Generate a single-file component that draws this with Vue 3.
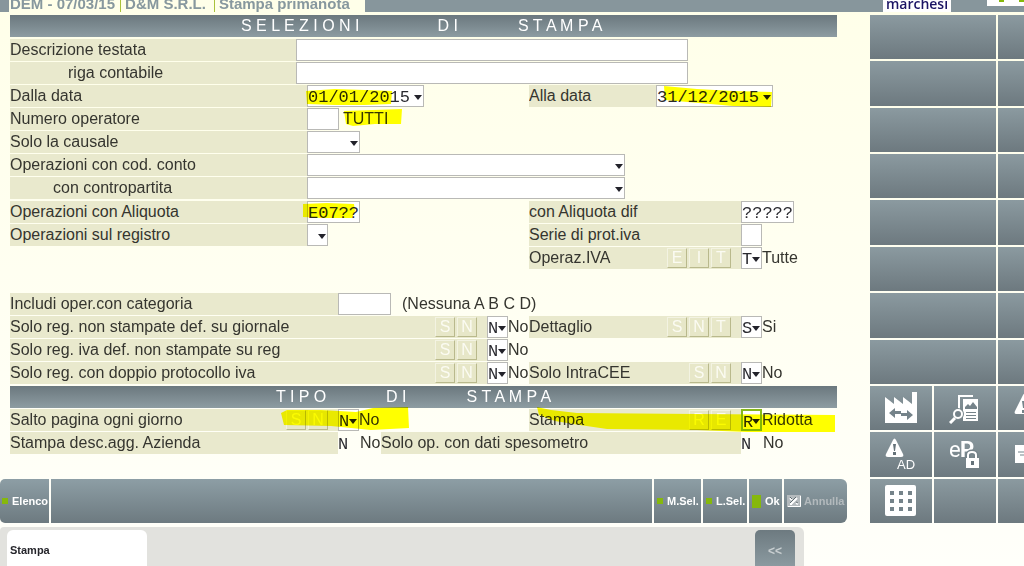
<script setup>
import { ref } from 'vue'

const upperFields = [
  { id: 'descr', label: 'Descrizione testata', indent: '' },
  { id: 'riga', label: 'riga contabile', indent: 'indent-lg' }
]
const accountFields = [
  { id: 'conto', label: 'Operazioni con cod. conto', indent: '' },
  { id: 'contro', label: 'con contropartita', indent: 'indent-md' }
]
const from = ref('01/01/2015')
const to = ref('31/12/2015')
const rate = ref('E07??')
const deferred = ref('?????')
const wideCells = 8
</script>

<template>
  <div class="page">
    <header class="topbar">
      <div class="crumbs">
        <span>DEM - 07/03/15</span>
        <span>D&amp;M S.R.L.</span>
        <span>Stampa primanota</span>
      </div>
      <div class="brand">marchesi</div>
      <div class="badge">
        <svg width="37" height="6" viewBox="0 0 37 6"><path d="M12 0h5v2h-5zM32 0h5v2h-5z" fill="#86b80c" /></svg>
      </div>
    </header>

    <div class="work">
      <main class="left">
        <form class="form" @submit.prevent>
          <h2 class="bar bar-first"><span>S E L E Z I O N I</span><span>D I</span><span>S T A M P A</span></h2>

          <div v-for="f in upperFields" :key="f.id" class="row">
            <div class="strip s-text"><label :for="f.id" :class="f.indent">{{ f.label }}</label></div>
            <input :id="f.id" class="box w-text" type="text" />
          </div>

          <div class="row">
            <div class="half">
              <div class="strip s-field"><label for="from">Dalla data</label></div>
              <span class="drop w-date">
                <select id="from" v-model="from"><option>01/01/2015</option></select>
                <svg class="arrow" viewBox="0 0 8 5"><path d="M0 0h8L4 5z" /></svg>
              </span>
              <svg class="mark m-from" viewBox="0 0 88 18"><path d="M1 3L30 1 60 2 87 3 86 16 60 17 30 17 2 16z" /></svg>
            </div>
            <div class="half-right">
              <div class="strip s-date"><label for="to">Alla data</label></div>
              <span class="drop w-date">
                <select id="to" v-model="to"><option>31/12/2015</option></select>
                <svg class="arrow" viewBox="0 0 8 5"><path d="M0 0h8L4 5z" /></svg>
              </span>
              <svg class="mark m-to" viewBox="0 0 110 21"><path d="M1 0L34 3 70 5 109 6 108 21 70 20 36 17 2 14z" /></svg>
            </div>
          </div>

          <div class="row">
            <div class="half">
              <div class="strip s-field"><label for="oper">Numero operatore</label></div>
              <input id="oper" class="box w-oper" type="text" />
              <output class="out out-gap" for="oper">TUTTI</output>
              <svg class="mark m-all" viewBox="0 0 60 18"><path d="M1 3L30 2 59 1 58 16 32 16 10 18 3 16z" /></svg>
            </div>
          </div>

          <div class="row">
            <div class="strip s-field"><label for="causale">Solo la causale</label></div>
            <span class="drop w-five">
              <select id="causale"><option></option></select>
              <svg class="arrow" viewBox="0 0 8 5"><path d="M0 0h8L4 5z" /></svg>
            </span>
          </div>

          <div v-for="f in accountFields" :key="f.id" class="row">
            <div class="strip s-field"><label :for="f.id" :class="f.indent">{{ f.label }}</label></div>
            <span class="drop w-account">
              <select :id="f.id"><option></option></select>
              <svg class="arrow" viewBox="0 0 8 5"><path d="M0 0h8L4 5z" /></svg>
            </span>
          </div>

          <div class="row spaced">
            <div class="half">
              <div class="strip s-field"><label for="rate">Operazioni con Aliquota</label></div>
              <input id="rate" v-model="rate" class="box w-five" type="text" />
              <svg class="mark m-rate" viewBox="0 0 54 17"><path d="M1 2L25 1 52 2 53 9 50 16 20 16 1 15z" /></svg>
            </div>
            <div class="half-right">
              <div class="strip s-right"><label for="deferred">con Aliquota dif</label></div>
              <input id="deferred" v-model="deferred" class="box w-five" type="text" />
            </div>
          </div>

          <div class="row">
            <div class="half">
              <div class="strip s-field"><label for="registro">Operazioni sul registro</label></div>
              <span class="drop w-one">
                <select id="registro"><option></option></select>
                <svg class="arrow" viewBox="0 0 8 5"><path d="M0 0h8L4 5z" /></svg>
              </span>
            </div>
            <div class="half-right">
              <div class="strip s-right"><label for="serie">Serie di prot.iva</label></div>
              <input id="serie" class="box w-one" type="text" />
            </div>
          </div>

          <div class="row">
            <div class="half"></div>
            <div class="half-right">
              <div class="strip s-right">
                <label for="iva">Operaz.IVA</label>
                <span class="keys"><button type="button">E</button><button type="button">I</button><button type="button">T</button></span>
              </div>
              <span class="drop w-one">
                <select id="iva"><option>T</option></select>
                <svg class="arrow" viewBox="0 0 8 5"><path d="M0 0h8L4 5z" /></svg>
              </span>
              <output class="out" for="iva">Tutte</output>
            </div>
          </div>

          <div class="row"></div>

          <div class="row">
            <div class="strip s-mid"><label for="categoria">Includi oper.con categoria</label></div>
            <input id="categoria" class="box w-five" type="text" />
            <span class="out hint">(Nessuna A B C D)</span>
          </div>

          <div class="row">
            <div class="half">
              <div class="strip s-long">
                <label for="giornale">Solo reg. non stampate def. su giornale</label>
                <span class="keys"><button type="button">S</button><button type="button">N</button></span>
              </div>
              <span class="drop w-one">
                <select id="giornale"><option>N</option></select>
                <svg class="arrow" viewBox="0 0 8 5"><path d="M0 0h8L4 5z" /></svg>
              </span>
              <output class="out" for="giornale">No</output>
            </div>
            <div class="half-right">
              <div class="strip s-right">
                <label for="dettaglio">Dettaglio</label>
                <span class="keys"><button type="button">S</button><button type="button">N</button><button type="button">T</button></span>
              </div>
              <span class="drop w-one">
                <select id="dettaglio"><option>S</option></select>
                <svg class="arrow" viewBox="0 0 8 5"><path d="M0 0h8L4 5z" /></svg>
              </span>
              <output class="out" for="dettaglio">Si</output>
            </div>
          </div>

          <div class="row">
            <div class="half">
              <div class="strip s-long">
                <label for="ivareg">Solo reg. iva def. non stampate su reg</label>
                <span class="keys"><button type="button">S</button><button type="button">N</button></span>
              </div>
              <span class="drop w-one">
                <select id="ivareg"><option>N</option></select>
                <svg class="arrow" viewBox="0 0 8 5"><path d="M0 0h8L4 5z" /></svg>
              </span>
              <output class="out" for="ivareg">No</output>
            </div>
          </div>

          <div class="row">
            <div class="half">
              <div class="strip s-long">
                <label for="doppio">Solo reg. con doppio protocollo iva</label>
                <span class="keys"><button type="button">S</button><button type="button">N</button></span>
              </div>
              <span class="drop w-one">
                <select id="doppio"><option>N</option></select>
                <svg class="arrow" viewBox="0 0 8 5"><path d="M0 0h8L4 5z" /></svg>
              </span>
              <output class="out" for="doppio">No</output>
            </div>
            <div class="half-right">
              <div class="strip s-right">
                <label for="intra">Solo IntraCEE</label>
                <span class="keys"><button type="button">S</button><button type="button">N</button></span>
              </div>
              <span class="drop w-one">
                <select id="intra"><option>N</option></select>
                <svg class="arrow" viewBox="0 0 8 5"><path d="M0 0h8L4 5z" /></svg>
              </span>
              <output class="out" for="intra">No</output>
            </div>
          </div>

          <h2 class="bar bar-second"><span>T I P O</span><span>D I</span><span>S T A M P A</span></h2>

          <div class="row">
            <div class="half">
              <div class="strip s-mid">
                <label for="salto">Salto pagina ogni giorno</label>
                <span class="keys"><button type="button">S</button><button type="button">N</button></span>
              </div>
              <span class="drop w-one">
                <select id="salto"><option>N</option></select>
                <svg class="arrow" viewBox="0 0 8 5"><path d="M0 0h8L4 5z" /></svg>
              </span>
              <output class="out" for="salto">No</output>
              <svg class="mark m-jump" viewBox="0 0 128 25"><path d="M0 6L6 3 40 3 75 5 92 1 127 0 128 21 90 23 50 19 3 18z" /></svg>
            </div>
            <div class="half-right">
              <div class="strip s-right">
                <label for="stampa">Stampa</label>
                <span class="keys"><button type="button">R</button><button type="button">E</button></span>
              </div>
              <span class="drop w-one focus">
                <select id="stampa"><option>R</option></select>
                <svg class="arrow" viewBox="0 0 8 5"><path d="M0 0h8L4 5z" /></svg>
              </span>
              <output class="out" for="stampa">Ridotta</output>
              <svg class="mark m-print" viewBox="0 0 300 26"><path d="M0 0L14 3 40 6 160 7 298 8 298 25 210 25 160 23 70 22 36 17 18 14 2 8z" /></svg>
            </div>
          </div>

          <div class="row">
            <div class="strip s-mid"><span>Stampa desc.agg. Azienda</span></div>
            <span class="fixed">N</span><span class="out">No</span>
            <div class="strip s-spes"><span>Solo op. con dati spesometro</span></div>
            <span class="fixed">N</span><span class="out">No</span>
          </div>
        </form>

        <div class="tools">
          <button type="button" class="tool t-list"><i class="led"></i>Elenco</button>
          <span class="tool filler"></span>
          <button type="button" class="tool t-msel"><i class="led"></i>M.Sel.</button>
          <button type="button" class="tool t-lsel"><i class="led"></i>L.Sel.</button>
          <button type="button" class="tool t-ok"><i class="led big"></i>Ok</button>
          <button type="button" class="tool t-cancel" disabled>
            <svg width="14" height="12" viewBox="0 0 14 12">
              <path d="M0 0h14v12H0z" fill="#b4babd" /><path d="M1 11.500h12.500V1" fill="none" stroke="#fff" />
              <path d="M3 3l2 2M9 8l2 1M4 9l6-6M3 9h2" fill="none" stroke="#fff" stroke-width="2" />
              <path d="M3 2l2 2M9 7l2 1M3 8l6-6" fill="none" stroke="#5f6b70" />
            </svg>Annulla
          </button>
        </div>
      </main>

      <aside class="pad">
        <template v-for="n in wideCells" :key="n">
          <button type="button" class="cell wide" aria-label="Libero"></button>
          <button type="button" class="cell" aria-label="Libero"></button>
        </template>
        <button type="button" class="cell" aria-label="Produzione">
          <svg width="32" height="32" viewBox="0 0 32 32">
            <path d="M0 31V5l9 7V5l9 7V5l9 7V0h5v31z" fill="#fff" />
            <path d="M4 21l6-5v3h6v3h-6v4zM28 23l-6-5v3h-6v3h6v4z" fill="#75838a" />
          </svg>
        </button>
        <button type="button" class="cell" aria-label="Ricerca documenti">
          <svg width="32" height="32" viewBox="0 0 32 32">
            <path d="M10 17V4h14" fill="none" stroke="#fff" stroke-width="2" />
            <path d="M14 7h15v22H14z" fill="#fff" />
            <path d="M16 17v-2l3-3 2 2 3-4 4 5v2zM17 20h10v1H17zM17 23h10v1H17zM17 26h10v1H17z" fill="#75838a" />
            <circle cx="9" cy="22" r="6" fill="#7b898f" />
            <circle cx="9" cy="22" r="4" fill="#75838a" stroke="#fff" stroke-width="2" />
            <path d="M6 26l-5 5" stroke="#fff" stroke-width="3" />
          </svg>
        </button>
        <button type="button" class="cell cut" aria-label="Avvisi">
          <svg width="32" height="32" viewBox="0 0 32 32"><path d="M9 3c1-2 2-2 3 0l8 16c1 2 0 3-2 3H3c-2 0-3-1-2-3z" fill="#fff" /><path d="M8 9h3l-1 7H9zM8 18h3v3H8z" fill="#75838a" /></svg>
        </button>
        <button type="button" class="cell" aria-label="Avvisi AD">
          <svg width="32" height="32" viewBox="0 0 32 32">
            <path d="M8 2c1-2 2-2 3 0l7 14c1 2 0 3-2 3H3c-2 0-3-1-2-3z" fill="#fff" />
            <path d="M8 6h3l-1 7H9zM8 14h3v3H8z" fill="#66737a" />
            <text x="12" y="31" class="ad">AD</text>
          </svg>
        </button>
        <button type="button" class="cell" aria-label="eP protetto">
          <svg width="32" height="32" viewBox="0 0 32 32">
            <text x="0" y="19" class="ep">e</text><text x="11" y="19" class="ep strong">P</text>
            <path d="M19 21v-4c0-4 8-4 8 0v4" fill="none" stroke="#75838a" stroke-width="5" />
            <path d="M19 21v-4c0-4 8-4 8 0v4" fill="none" stroke="#fff" stroke-width="2" />
            <path d="M17 20h13v10H17z" fill="#fff" /><path d="M22 23h3v4h-3z" fill="#66737a" />
          </svg>
        </button>
        <button type="button" class="cell cut" aria-label="Schede">
          <svg width="32" height="32" viewBox="0 0 32 32"><path d="M1 7h30v18H1z" fill="#fff" /><path d="M4 14h8M6 17h6" stroke="#75838a" /></svg>
        </button>
        <button type="button" class="cell" aria-label="Tastierino">
          <svg width="32" height="32" viewBox="0 0 32 32">
            <rect width="31" height="31" rx="2" fill="#fff" />
            <path d="M5 6h4v4H5zM14 6h4v4h-4zM23 6h4v4h-4zM5 14h4v4H5zM14 14h4v4h-4zM23 14h4v4h-4zM5 22h4v4H5zM14 22h4v4h-4zM23 22h4v4h-4z" fill="#75838a" />
          </svg>
        </button>
        <button type="button" class="cell" aria-label="Libero"></button>
        <button type="button" class="cell" aria-label="Libero"></button>
      </aside>
    </div>

    <footer class="dock">
      <button type="button" class="tab">Stampa</button>
      <button type="button" class="collapse">&lt;&lt;</button>
    </footer>
  </div>
</template>

<style>
body {
  margin: 0;
  overflow: hidden;
}
</style>

<style scoped>
* {
  box-sizing: border-box;
}
.page {
  display: flex;
  flex-direction: column;
  min-height: 100vh;
  background: linear-gradient(#ffffe9, #fffff3 60%, #fffffa);
  font-family: 'Liberation Sans', Arial, sans-serif;
  font-size: 16px;
  color: #35352f;
}
button {
  font-family: inherit;
  padding: 0;
  margin: 0;
  border: 0;
  border-radius: 0;
}
.topbar {
  display: flex;
  height: 12px;
  overflow: hidden;
  background: #87969c;
  padding-left: 9px;
}
.crumbs {
  display: flex;
  flex: none;
  align-items: flex-end;
  width: 356px;
  margin-right: auto;
  background: #ffffe9;
  color: #87989e;
  font-size: 15px;
  font-weight: bold;
  line-height: 16px;
  white-space: nowrap;
}
.crumbs span {
  padding: 0 5px 0 1px;
}
.crumbs span + span {
  border-left: 1px solid #a9c23a;
  padding: 0 8px 0 4px;
}
.brand {
  display: flex;
  align-items: flex-end;
  justify-content: center;
  width: 68px;
  margin-right: 36px;
  background: #fff;
  color: #1b1464;
  font-family: 'Open Sans', 'Noto Sans', sans-serif;
  font-size: 14px;
  font-weight: 600;
  line-height: 16px;
}
.badge {
  width: 37px;
  height: 6px;
  background: #fff;
}
.badge svg {
  display: block;
}
.work {
  display: flex;
  gap: 23px;
  padding-top: 3px;
}
.left {
  flex: 1;
  min-width: 0;
}
.form {
  display: flex;
  flex-direction: column;
  gap: 1px;
  margin: 0 10px;
}
.bar {
  display: flex;
  height: 22px;
  margin: 0;
  background: linear-gradient(#6b787e, #8d9ca2);
  color: #fff;
  font-size: 16px;
  font-weight: normal;
  line-height: 22px;
  white-space: nowrap;
}
.bar span + span {
  margin-left: 60px;
}
.bar-first {
  padding-left: 231px;
  margin-bottom: 1px;
}
.bar-first span:first-child {
  margin-right: 18px;
}
.bar-second {
  padding-left: 266px;
  margin-top: 1px;
}
.row,
.half,
.half-right {
  display: flex;
  height: 22px;
}
.spaced {
  margin-top: 1px;
}
.half,
.half-right {
  position: relative;
}
.half {
  flex: none;
  width: 519px;
}
.half-right {
  flex: 1;
}
.strip {
  display: flex;
  flex: none;
  justify-content: space-between;
  background: #e9e9cd;
  line-height: 21px;
  white-space: nowrap;
}
.s-text { width: 286px; }
.s-field { width: 297px; }
.s-mid { width: 328px; }
.s-long { width: 477px; }
.s-date { width: 127px; }
.s-right { width: 212px; }
.s-spes { width: 360px; }
.indent-lg { padding-left: 58px; }
.indent-md { padding-left: 43px; }
.box,
.drop {
  display: block;
  flex: none;
  position: relative;
  height: 22px;
  margin: 0;
  border: 1px solid #b9b9b6;
  border-radius: 0;
  background: #fff;
}
.box,
.drop select,
.fixed {
  padding: 3px 0 0;
  font-family: 'Liberation Mono', monospace;
  font-size: 17px;
  line-height: 18px;
  color: #2a2a30;
}
.drop select {
  display: block;
  width: 100%;
  height: 20px;
  border: 0;
  border-radius: 0;
  background: none;
  appearance: none;
  outline: none;
}
.arrow {
  position: absolute;
  right: 1px;
  top: 9px;
  width: 8px;
  height: 5px;
  fill: #22222a;
  pointer-events: none;
}
.focus {
  border: 2px solid #86b81a;
}
.focus select {
  height: 18px;
}
.focus .arrow {
  right: 0;
  top: 8px;
}
.w-text { width: 392px; }
.w-date { width: 117px; }
.w-oper { width: 32px; }
.w-five { width: 53px; }
.w-account { width: 318px; }
.w-one { width: 21px; }
.fixed {
  width: 22px;
  padding-top: 4px;
}
.out {
  line-height: 21px;
  white-space: nowrap;
}
.fixed + .out {
  width: 21px;
}
.out-gap {
  padding-left: 4px;
}
.hint {
  padding-left: 11px;
}
.keys {
  display: flex;
  gap: 2px;
  padding: 1px 10px 0 0;
}
.keys button {
  width: 20px;
  height: 20px;
  border: 1px solid;
  border-color: #f3f3e2 #b9b98c #b9b98c #f3f3e2;
  background: #e7e7c8;
  color: #fbfbf2;
  font-size: 16px;
  line-height: 16px;
}
.mark {
  position: absolute;
  fill: #ffff00;
  mix-blend-mode: multiply;
  pointer-events: none;
}
.m-from { left: 295px; top: 3px; width: 88px; height: 18px; }
.m-to { left: 134px; top: 1px; width: 110px; height: 21px; }
.m-all { left: 333px; top: 0; width: 60px; height: 18px; }
.m-rate { left: 292px; top: 1px; width: 54px; height: 17px; }
.m-jump { left: 271px; top: -2px; width: 128px; height: 25px; }
.m-print { left: 8px; top: -2px; width: 300px; height: 26px; }
.tools {
  display: flex;
  gap: 2px;
  height: 44px;
  margin-top: 25px;
}
.tool {
  display: flex;
  align-items: center;
  gap: 4px;
  padding-left: 3px;
  background: linear-gradient(#8d9ea5, #6d7a80);
  color: #fff;
  font-size: 11px;
  font-weight: bold;
  white-space: nowrap;
}
.tool svg {
  flex: none;
}
.filler { flex: 1; }
.t-list { width: 49px; border-radius: 5px 0 0 5px; padding-left: 2px; }
.t-msel { width: 47px; }
.t-lsel { width: 44px; }
.t-ok { width: 33px; }
.t-cancel { width: 63px; border-radius: 0 6px 6px 0; color: #b3babd; gap: 3px; }
.led {
  flex: none;
  width: 6px;
  height: 6px;
  background: #86b80c;
}
.led.big {
  width: 9px;
  height: 13px;
}
.pad {
  display: grid;
  flex: none;
  width: 154px;
  grid-template-columns: 62px 62px 1fr;
  grid-template-rows: repeat(11, 1fr);
  gap: 2px;
}
.cell {
  display: flex;
  align-items: center;
  justify-content: center;
  min-width: 0;
  overflow: hidden;
  background: linear-gradient(#8b9aa0, #6d797f);
}
.cell svg {
  flex: none;
}
.wide {
  grid-column: span 2;
}
.cut {
  justify-content: flex-start;
  padding-left: 16px;
}
.ad {
  fill: #fff;
  font-family: 'Liberation Sans', sans-serif;
  font-size: 13px;
}
.ep {
  fill: #fff;
  font-family: 'Roboto', sans-serif;
  font-size: 22px;
}
.ep.strong {
  font-weight: bold;
}
.dock {
  display: flex;
  flex: 1;
  justify-content: space-between;
  align-items: stretch;
  min-height: 39px;
  margin: 4px 220px 0 0;
  padding: 3px 9px 0 7px;
  border-radius: 4px 6px 0 0;
  background: #e2e2de;
}
.tab {
  width: 140px;
  padding: 4px 0 0 3px;
  border-radius: 6px 6px 0 0;
  background: #fff;
  color: #26262c;
  font-size: 11px;
  font-weight: bold;
  text-align: left;
}
.collapse {
  width: 40px;
  padding-top: 6px;
  border-radius: 5px 5px 0 0;
  background: linear-gradient(#6d7a80, #8b9aa0);
  color: #c9cfd1;
  font-size: 12px;
  font-weight: bold;
}
</style>
